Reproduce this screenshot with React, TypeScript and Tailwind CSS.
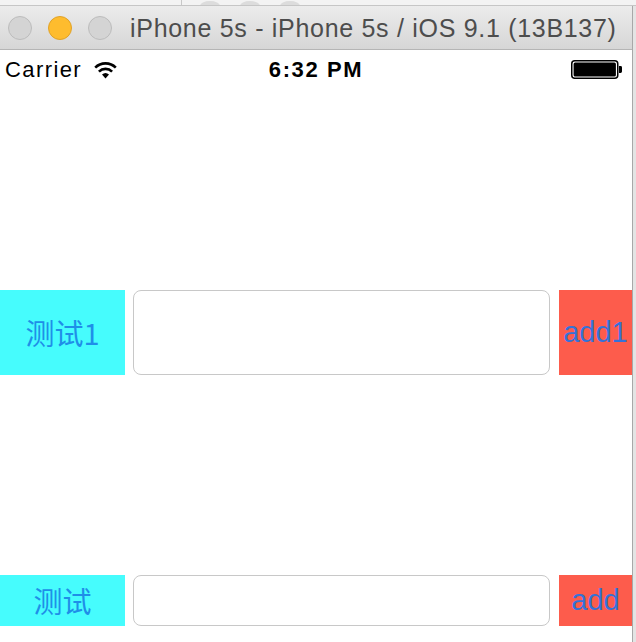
import React from "react";

function Wifi() {
  return (
    <svg width="25" height="18" viewBox="0 0 25 18">
      <path d="M12.5 17.5 L16 13.6 A5.2 5.2 0 0 0 9 13.6 Z" fill="#000" />
      <path d="M5.9 10.6 A9.4 9.4 0 0 1 19.1 10.6" stroke="#000" strokeWidth="2.6" fill="none" />
      <path d="M2.2 6.6 A14.6 14.6 0 0 1 22.8 6.6" stroke="#000" strokeWidth="2.6" fill="none" />
    </svg>
  );
}

function Battery() {
  return (
    <svg width="52" height="20" viewBox="0 0 52 20">
      <rect x="0.75" y="0.75" width="46" height="17.5" rx="3" fill="none" stroke="#000" strokeWidth="1.5" />
      <rect x="2.6" y="2.6" width="42.3" height="13.8" rx="1.5" fill="#000" />
      <path d="M48 6 h1.6 a1.4 1.4 0 0 1 1.4 1.4 v4.2 a1.4 1.4 0 0 1 -1.4 1.4 h-1.6 Z" fill="#000" />
    </svg>
  );
}

function Row({
  label,
  btn,
  h,
}: {
  label: string;
  btn: string;
  h: string;
}) {
  return (
    <div className={`flex ${h}`}>
      <div
        className="w-[125px] bg-[#46fcfd] flex items-center justify-center text-[29px] text-[#1f8ee8]"
        style={{ fontFamily: '"Noto Sans CJK SC", "Noto Sans", sans-serif' }}
      >
        {label}
      </div>
      <div className="ml-[8px] flex-1 rounded-[8px] border border-[#c8c8c8] bg-white" />
      <div
        className="ml-[9px] w-[73px] bg-[#fd5c4c] flex items-center justify-center text-[29px] text-[#3572d8]"
        style={{ fontFamily: '"Liberation Sans", Arial, sans-serif' }}
      >
        {btn}
      </div>
    </div>
  );
}

export default function App() {
  return (
    <div
      className="w-[636px] h-[642px] bg-[#ececec] flex flex-col overflow-hidden"
      style={{ fontFamily: '"Liberation Sans", Arial, sans-serif' }}
    >
      {/* window behind */}
      <div className="h-[6px] shrink-0 bg-[#f3f3f3]">
        <svg width="636" height="6" viewBox="0 0 636 6">
          <line x1="181.5" y1="0" x2="181.5" y2="6" stroke="#c8c8c8" />
          <ellipse cx="210" cy="6" rx="10" ry="5" fill="#dcdcdc" />
          <ellipse cx="250" cy="6" rx="10" ry="5" fill="#dcdcdc" />
          <ellipse cx="290" cy="6" rx="10" ry="5" fill="#dcdcdc" />
          <line x1="0" y1="5.5" x2="636" y2="5.5" stroke="#c6c6c6" />
        </svg>
      </div>
      <div className="flex flex-1 min-h-0">
        <div className="w-[632px] flex flex-col">
          {/* title bar */}
          <div className="h-[44px] shrink-0 rounded-tr-[8px] bg-gradient-to-b from-[#ececec] to-[#d6d6d6] border-b border-[#b5b5b5] flex items-center">
            <div className="flex items-center gap-[16px] pl-[8px]">
              <div className="w-[24px] h-[24px] rounded-full bg-[#d4d4d4] border border-[#bcbcbc]" />
              <div className="w-[24px] h-[24px] rounded-full bg-[#febc2e] border border-[#e0a228]" />
              <div className="w-[24px] h-[24px] rounded-full bg-[#d4d4d4] border border-[#bcbcbc]" />
            </div>
            <div className="ml-[18px] text-[25px] tracking-[0.7px] text-[#4d4d4d] leading-none mt-[1px]">
              iPhone 5s - iPhone 5s / iOS 9.1 (13B137)
            </div>
          </div>
          {/* screen */}
          <div className="flex-1 bg-white flex flex-col">
            <div className="h-[40px] shrink-0 flex items-center">
              <div className="flex items-center pl-[5px] w-[200px]">
                <span className="text-[22px] tracking-[1.4px] text-black leading-none">Carrier</span>
                <span className="ml-[11px] flex items-center">
                  <Wifi />
                </span>
              </div>
              <div className="flex-1 flex justify-center">
                <span className="text-[22px] font-bold tracking-[1.6px] text-black leading-none">
                  6:32 PM
                </span>
              </div>
              <div className="w-[200px] flex justify-end pr-[9px] items-center">
                <Battery />
              </div>
            </div>
            <div className="mt-[200px]">
              <Row label="测试1" btn="add1" h="h-[85px]" />
            </div>
            <div className="mt-[200px]">
              <Row label="测试" btn="add" h="h-[51px]" />
            </div>
          </div>
        </div>
        <div className="w-[4px] bg-[#e4e4e4] border-l border-[#a8a8a8]" />
      </div>
    </div>
  );
}
